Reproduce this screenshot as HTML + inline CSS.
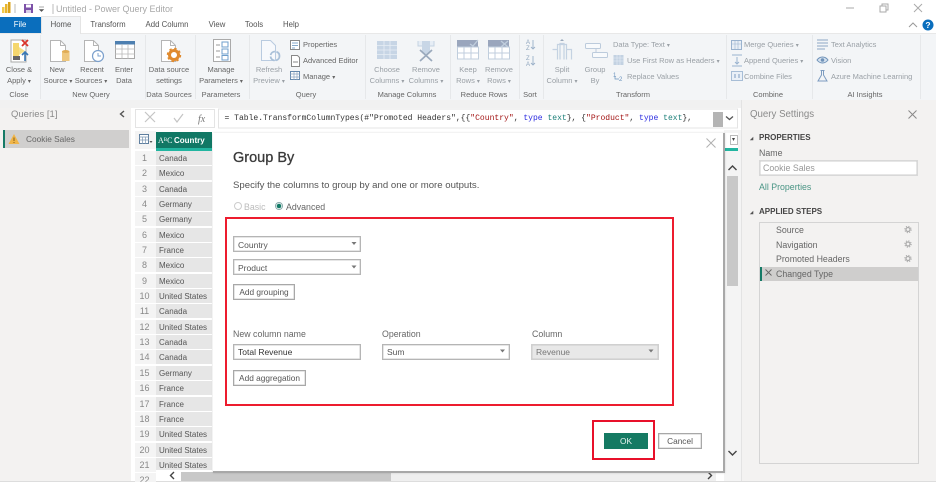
<!DOCTYPE html>
<html><head><meta charset="utf-8"><title>Power Query Editor</title>
<style>
html,body{margin:0;padding:0;background:#fff}
#p{position:relative;width:936px;height:482px;overflow:hidden;background:#fff;font-family:"Liberation Sans",sans-serif;font-size:7.5px;color:#555;filter:blur(.35px)}
#p div{position:absolute}
#p i{font-style:normal;font-size:6px}
.t{position:absolute;white-space:nowrap;line-height:12px;height:12px}
.c{transform:translateX(-50%);text-align:center}
.d{color:#9aa0a6}
.g{color:#666}
.tab{font-size:7.8px}
.r{left:135px;width:21px;height:14.4px;background:#f4f4f4}
.v{left:156px;width:56px;height:14.4px;background:#e6e6e6}
.n{left:135px;width:19px;text-align:center;font-size:9px;color:#888}
.w{left:159px;font-size:8px;color:#555}
.box{background:#fff;border:1px solid #b5b5b5;box-sizing:border-box;box-shadow:inset 0 0 0 .5px #ccc}
.fd{font-size:8.5px;color:#555}
.lab{font-size:8.8px;color:#666}
.q{font-size:8.8px;color:#666}
</style></head><body>
<div id="p">
<!-- backgrounds -->
<div style="left:0;top:33px;width:936px;height:67px;background:#f3f5f7;border-top:1px solid #e8e8e8;box-sizing:border-box"></div>
<div style="left:0;top:100px;width:936px;height:8px;background:#f1f1f1"></div>
<div style="left:0;top:108px;width:131px;height:374px;background:#f3f2f1"></div>
<div style="left:742px;top:100px;width:194px;height:382px;background:#f3f2f1"></div>
<div style="left:741px;top:100px;width:1px;height:382px;background:#e3e3e3"></div>
<div style="left:724px;top:130px;width:17px;height:352px;background:#f4f4f4"></div>
<div style="left:0;top:481px;width:936px;height:1px;background:#ddd"></div>
<!-- ribbon separators -->
<div style="left:40px;top:35px;width:1px;height:64px;background:#e6e8ea"></div>
<div style="left:145px;top:35px;width:1px;height:64px;background:#e6e8ea"></div>
<div style="left:195px;top:35px;width:1px;height:64px;background:#e6e8ea"></div>
<div style="left:249px;top:35px;width:1px;height:64px;background:#e6e8ea"></div>
<div style="left:365px;top:35px;width:1px;height:64px;background:#e6e8ea"></div>
<div style="left:450px;top:35px;width:1px;height:64px;background:#e6e8ea"></div>
<div style="left:519px;top:35px;width:1px;height:64px;background:#e6e8ea"></div>
<div style="left:543px;top:35px;width:1px;height:64px;background:#e6e8ea"></div>
<div style="left:726px;top:35px;width:1px;height:64px;background:#e6e8ea"></div>
<div style="left:812px;top:35px;width:1px;height:64px;background:#e6e8ea"></div>
<div style="left:920px;top:35px;width:1px;height:64px;background:#e6e8ea"></div>
<!-- tabs -->
<div style="left:0;top:17px;width:41px;height:16px;background:#0a6ebd"></div>
<div style="left:41px;top:16px;width:40px;height:18px;background:#f3f5f7;border:1px solid #e4e4e4;border-bottom:0;box-sizing:border-box"></div>
<span class="t c tab" style="left:20px;top:19px;color:#fff">File</span>
<span class="t c tab" style="left:61px;top:19px">Home</span>
<span class="t c tab" style="left:108px;top:19px">Transform</span>
<span class="t c tab" style="left:167px;top:19px">Add Column</span>
<span class="t c tab" style="left:217px;top:19px">View</span>
<span class="t c tab" style="left:254px;top:19px">Tools</span>
<span class="t c tab" style="left:291px;top:19px">Help</span>
<span class="t" style="left:56px;top:3px;font-size:9px;color:#a8a8a8">Untitled - Power Query Editor</span>

<!-- icon layer -->
<svg width="936" height="482" viewBox="0 0 936 482" style="position:absolute;left:0;top:0">
<!-- title bar -->
<rect x="2" y="7" width="2.500" height="6" fill="#f2c94c"/><rect x="5" y="4" width="2.500" height="9" fill="#e8b52c"/><rect x="8" y="2" width="2.500" height="11" fill="#d9a21a"/>
<path d="M15 4V13M53 4V14" stroke="#bbb" stroke-width="1"/>
<rect x="24" y="4" width="9" height="9" fill="#7d52a8"/><rect x="26" y="4.500" width="5" height="3" fill="#fff"/><rect x="26" y="10" width="5" height="3" fill="#d8d0e8"/>
<path d="M39 7h5M39.500 9.500h4l-2 2z" fill="#555" stroke="#555" stroke-width=".6"/>
<path d="M846 8h8" stroke="#aaa" stroke-width="1"/>
<path d="M880 6h6v6h-6zM882 6V4h6v6h-2" fill="none" stroke="#aaa" stroke-width="1"/>
<path d="M914 4l8 8M922 4l-8 8" stroke="#aaa" stroke-width="1"/>
<path d="M909 27l4-4 4 4" fill="none" stroke="#999" stroke-width="1"/>
<circle cx="928" cy="25" r="5.500" fill="#0a6ebd"/>
<text x="928" y="28" font-family="Liberation Sans" font-size="8.500" font-weight="bold" fill="#fff" text-anchor="middle">?</text>
<!-- Close & Apply -->
<rect x="11" y="40" width="15" height="22" fill="#fff" stroke="#aaa"/><path d="M13 43h6v13l-6 3z" fill="#f5d76e"/><path d="M19 47l6 4-6 4z" fill="#f5e08a"/><rect x="13" y="56" width="7" height="4" fill="#666"/>
<path d="M22 40l6 6M28 40l-6 6" stroke="#d9342b" stroke-width="1.800"/>
<path d="M25 61v-9M22 55l3-3 3 3" fill="none" stroke="#3a78b5" stroke-width="1.600"/>
<!-- New Source -->
<path d="M50.500 40.500h10l5 5v16h-15z" fill="#fff" stroke="#b5b5b5"/><path d="M60.500 40.500v5h5" fill="none" stroke="#b5b5b5"/>
<path d="M62 52h7.500v9h-7.500z" fill="#eec77e"/><ellipse cx="65.700" cy="51.500" rx="3.800" ry="1.500" fill="#e0ac55"/>
<!-- Recent Sources -->
<path d="M84.500 40.500h9l5 5v16h-14z" fill="#fff" stroke="#b5b5b5"/><path d="M93.500 40.500v5h5" fill="none" stroke="#b5b5b5"/>
<circle cx="98" cy="56" r="5.500" fill="#fff" stroke="#7ba0cc" stroke-width="1.200"/><path d="M98 53v3h3" fill="none" stroke="#7ba0cc"/>
<!-- Enter Data -->
<rect x="115.500" y="41.500" width="19" height="17" fill="#fff" stroke="#a8a8a8"/><rect x="115" y="41" width="20" height="3.500" fill="#4d7fb0"/>
<path d="M115 49h20M115 54h20M122 44v15M128 44v15" stroke="#b8b8b8" stroke-width=".8"/>
<!-- Data source settings -->
<path d="M161.500 40.500h9l5 5v16h-14z" fill="#fff" stroke="#b5b5b5"/><path d="M170.500 40.500v5h5" fill="none" stroke="#b5b5b5"/>
<circle cx="174" cy="55" r="4.500" fill="#fff" stroke="#e08a2e" stroke-width="3"/><circle cx="174" cy="55" r="6.500" fill="none" stroke="#e08a2e" stroke-width="1.400" stroke-dasharray="2.500 2.600"/>
<!-- Manage Parameters -->
<rect x="213.500" y="39.500" width="17" height="22" fill="#fff" stroke="#aaa"/><path d="M216 45h4M216 51h4M216 57h4" stroke="#999"/><rect x="222" y="42" width="6" height="5" fill="#fff" stroke="#6f9fcc"/><rect x="222" y="49" width="6" height="5" fill="#fff" stroke="#6f9fcc"/><rect x="222" y="55.500" width="6" height="4.500" fill="#fff" stroke="#6f9fcc"/>
<!-- Refresh -->
<path d="M261.500 40.500h9l5 5v15h-14z" fill="#f7f9fc" stroke="#b9cbe0"/>
<circle cx="275" cy="56" r="4.500" fill="none" stroke="#a9c0d8" stroke-width="1.800" stroke-dasharray="6 1.500"/>
<!-- small query icons -->
<rect x="290.500" y="40.500" width="9" height="9" fill="#fff" stroke="#888"/><path d="M292 43h6M292 45.500h6M292 48h3" stroke="#5b8bb8" stroke-width=".8"/>
<path d="M291.500 55.500h6l2 2v9h-8z" fill="#fff" stroke="#888"/><path d="M293 62h5" stroke="#888"/>
<rect x="290.500" y="71.500" width="9" height="8" fill="#fff" stroke="#6488ad"/><path d="M290 74h10M290 77h10M294 72v8M297 72v8" stroke="#8aa4c0" stroke-width=".7"/>
<!-- Choose columns -->
<rect x="377" y="41" width="20" height="18" fill="#c7d5e5"/><path d="M377 45.500h20M377 50h20M377 54.500h20M384 41v18M390 41v18" stroke="#e8eef5" stroke-width=".8"/>
<!-- Remove columns -->
<path d="M418 41v5h16v-5" fill="#e6edf5" stroke="#c4d2e2"/><path d="M422 41h8v12l-4 3-4-3z" fill="#c8d6e6"/>
<path d="M420 50l12 11M432 50l-12 11" stroke="#9aa9bc" stroke-width="1.700"/>
<!-- Keep rows -->
<rect x="457" y="40" width="21" height="7" fill="#9aa6bd"/><rect x="457.500" y="47" width="21" height="12" fill="#fff" stroke="#c0cedd"/><path d="M457 53h21M464 47v12M471 47v12" stroke="#c0cedd"/><path d="M470 44l3 2 5-6" fill="none" stroke="#c0cedd" stroke-width="1.300"/>
<!-- Remove rows -->
<rect x="488" y="40" width="21" height="7" fill="#9aa6bd"/><rect x="488.500" y="47" width="21" height="12" fill="#fff" stroke="#c0cedd"/><path d="M488 53h21M495 47v12M502 47v12" stroke="#c0cedd"/><path d="M501 41l7 6M508 41l-7 6" stroke="#c0cedd" stroke-width="1.300"/>
<!-- sort -->
<text x="526" y="44" font-family="Liberation Sans" font-size="6" fill="#8fa5bd">A</text><text x="526" y="50" font-family="Liberation Sans" font-size="6" fill="#8fa5bd">Z</text>
<text x="526" y="60" font-family="Liberation Sans" font-size="6" fill="#8fa5bd">Z</text><text x="526" y="66" font-family="Liberation Sans" font-size="6" fill="#8fa5bd">A</text>
<path d="M533 40v9M531 47l2 2 2-2M533 56v9M531 63l2 2 2-2" fill="none" stroke="#9ab0c8" stroke-width=".9"/>
<!-- split column -->
<path d="M552.500 49.500h5v10M566.500 59.500v-10h5v10M557.500 59.500v-15h9v15M560 59.500v-16h4v16" fill="none" stroke="#c4d2e2" stroke-width="1.200"/><path d="M560 41h4l-2-2z" fill="#9aa9bc"/>
<!-- group by -->
<rect x="585.500" y="43.500" width="15" height="5" rx="1" fill="#f8fafc" stroke="#bccbdc"/><rect x="592.500" y="52.500" width="15" height="5" rx="1" fill="#f8fafc" stroke="#bccbdc"/><path d="M596 48.500v4" stroke="#bccbdc"/>
<!-- Transform small -->
<rect x="613.500" y="55" width="10" height="10" fill="#c3d2e2"/><path d="M613 58h11M613 61h11M617 55v10M620 55v10" stroke="#e8eef5" stroke-width=".6"/>
<text x="613" y="77" font-family="Liberation Sans" font-size="6" fill="#6a93bd">1</text><text x="619" y="81" font-family="Liberation Sans" font-size="6" fill="#6a93bd">2</text><path d="M615 76v3h4" fill="none" stroke="#6a93bd" stroke-width=".7"/>
<!-- combine -->
<rect x="731.500" y="40.500" width="10" height="9" fill="#e9eff6" stroke="#9ab3cf"/><path d="M731 44h11M735 41v8M738 41v8" stroke="#9ab3cf" stroke-width=".6"/>
<path d="M732 55h10M732 66h10" stroke="#9ab3cf"/><path d="M737 57v7M735 62l2 2 2-2" fill="none" stroke="#9ab3cf"/>
<rect x="731.500" y="71.500" width="11" height="9" fill="#eaf0f7" stroke="#a7bdd6"/><path d="M735 74v4M739 74v4" stroke="#7d9cc0"/>
<!-- AI -->
<path d="M817 40h11M817 43h11M817 46h11M817 49h8" stroke="#8ea8c4" stroke-width=".9"/>
<path d="M817 60c3-4 8-4 11 0c-3 4-8 4-11 0z" fill="#d6e2ef" stroke="#6f92b8"/><circle cx="822.500" cy="60" r="1.800" fill="#6f92b8"/>
<path d="M820.500 70.500h4M821.500 71v4l-3.500 6h9l-3.500-6v-4" fill="none" stroke="#7d9cc0"/>
<!-- left chevron -->
<path d="M124 111l-3.500 3 3.500 3" fill="none" stroke="#555" stroke-width="1.400"/>
<!-- formula icons -->
<rect x="135.500" y="109.500" width="79" height="18" fill="#fff" stroke="#e4e4e4"/>
<path d="M145 112l10 10M155 112l-10 10" stroke="#c4c4c4" stroke-width="1.200"/>
<path d="M174 118l3 4 6-8" fill="none" stroke="#c4c4c4" stroke-width="1.200"/>
<text x="198" y="122" font-family="Liberation Serif" font-style="italic" font-size="10" fill="#777">fx</text>
<rect x="218.500" y="109" width="519" height="19" fill="#fff" stroke="#e4e4e4"/>
<rect x="713" y="112" width="10" height="15" fill="#b4b4b4"/>
<path d="M726 116.500l3.500 3 3.500-3" fill="none" stroke="#555" stroke-width="1.300"/>
<!-- right X -->
<path d="M908.500 110.500l8 8M916.500 110.500l-8 8" stroke="#888" stroke-width="1"/>
<path d="M753 140l-2.500 0 2.500-2.500zM753 214l-2.500 0 2.500-2.500z" fill="#555" stroke="#555" stroke-width=".6"/>
</svg>

<!-- ribbon big labels -->
<span class="t c g" style="left:19px;top:64px">Close &amp;</span><span class="t c g" style="left:19px;top:75px">Apply <i>▾</i></span>
<span class="t c g" style="left:57px;top:64px">New</span><span class="t c g" style="left:58px;top:75px">Source <i>▾</i></span>
<span class="t c g" style="left:92px;top:64px">Recent</span><span class="t c g" style="left:91px;top:75px">Sources <i>▾</i></span>
<span class="t c g" style="left:124px;top:64px">Enter</span><span class="t c g" style="left:124px;top:75px">Data</span>
<span class="t c g" style="left:169px;top:64px">Data source</span><span class="t c g" style="left:169px;top:75px">settings</span>
<span class="t c g" style="left:221px;top:64px">Manage</span><span class="t c g" style="left:221px;top:75px">Parameters <i>▾</i></span>
<span class="t c d" style="left:269px;top:64px">Refresh</span><span class="t c d" style="left:269px;top:75px">Preview <i>▾</i></span>
<span class="t g" style="left:303px;top:39px">Properties</span><span class="t g" style="left:303px;top:55px">Advanced Editor</span><span class="t g" style="left:303px;top:71px">Manage <i>▾</i></span>
<span class="t c d" style="left:387px;top:64px">Choose</span><span class="t c d" style="left:387px;top:75px">Columns <i>▾</i></span>
<span class="t c d" style="left:426px;top:64px">Remove</span><span class="t c d" style="left:426px;top:75px">Columns <i>▾</i></span>
<span class="t c d" style="left:468px;top:64px">Keep</span><span class="t c d" style="left:468px;top:75px">Rows <i>▾</i></span>
<span class="t c d" style="left:499px;top:64px">Remove</span><span class="t c d" style="left:499px;top:75px">Rows <i>▾</i></span>
<span class="t c d" style="left:562px;top:64px">Split</span><span class="t c d" style="left:562px;top:75px">Column <i>▾</i></span>
<span class="t c d" style="left:595px;top:64px">Group</span><span class="t c d" style="left:595px;top:75px">By</span>
<span class="t d" style="left:613px;top:39px">Data Type: Text <i>▾</i></span><span class="t d" style="left:627px;top:55px">Use First Row as Headers <i>▾</i></span><span class="t d" style="left:627px;top:71px">Replace Values</span>
<span class="t d" style="left:744px;top:39px">Merge Queries <i>▾</i></span><span class="t d" style="left:744px;top:55px">Append Queries <i>▾</i></span><span class="t d" style="left:744px;top:71px">Combine Files</span>
<span class="t d" style="left:831px;top:39px">Text Analytics</span><span class="t d" style="left:831px;top:55px">Vision</span><span class="t d" style="left:831px;top:71px">Azure Machine Learning</span>
<!-- group labels -->
<span class="t c g" style="left:19px;top:88.500px">Close</span>
<span class="t c g" style="left:91px;top:88.500px">New Query</span>
<span class="t c g" style="left:169px;top:88.500px">Data Sources</span>
<span class="t c g" style="left:221px;top:88.500px">Parameters</span>
<span class="t c g" style="left:306px;top:88.500px">Query</span>
<span class="t c g" style="left:407px;top:88.500px">Manage Columns</span>
<span class="t c g" style="left:484px;top:88.500px">Reduce Rows</span>
<span class="t c g" style="left:530px;top:88.500px">Sort</span>
<span class="t c g" style="left:633px;top:88.500px">Transform</span>
<span class="t c g" style="left:768px;top:88.500px">Combine</span>
<span class="t c g" style="left:865px;top:88.500px">AI Insights</span>

<!-- queries -->
<span class="t" style="left:11px;top:109px;font-size:9.500px;color:#8a8a8a">Queries [1]</span>
<div style="left:3px;top:130px;width:126px;height:18px;background:#d0cfce"></div>
<div style="left:3px;top:130px;width:2px;height:18px;background:#157a66"></div>
<svg width="12" height="12" style="position:absolute;left:8px;top:133px"><path d="M6 1l5.500 10h-11z" fill="#f0b549"/><path d="M6 4.500V8M6 9v1" stroke="#6b4a10" stroke-width=".8"/></svg>
<span class="t" style="left:26px;top:133px;font-size:8.300px;color:#666">Cookie Sales</span>

<!-- formula text -->
<span class="t" style="left:224.500px;top:113px;font-family:'Liberation Mono',monospace;font-size:8.040px;color:#333">= Table.TransformColumnTypes(#"Promoted Headers",{{<span style="color:#a31515">"Country"</span>, <span style="color:#2b2be0">type</span> <span style="color:#1b7f78">text</span>}, {<span style="color:#a31515">"Product"</span>, <span style="color:#2b2be0">type</span> <span style="color:#1b7f78">text</span>},</span>

<!-- table header -->
<div style="left:135px;top:131px;width:21px;height:18px;background:#f4f4f4"></div>
<svg width="14" height="12" style="position:absolute;left:139px;top:134px"><rect x=".5" y=".5" width="9" height="9" fill="#fff" stroke="#5f7f9f"/><path d="M0 3h10M0 6h10M3.500 3v7M6.500 3v7" stroke="#7c98b4" stroke-width=".7"/><path d="M10.500 7h3l-1.500 2z" fill="#555"/></svg>
<div style="left:156px;top:132px;width:56px;height:16px;background:#117865"></div>
<div style="left:156px;top:148px;width:56px;height:2.500px;background:#22b5a0"></div>
<span class="t" style="left:158px;top:135px;color:#fff;font-size:8px;font-family:'Liberation Serif',serif">A<span style="font-size:5px;vertical-align:2px">B</span>C</span>
<span class="t" style="left:174px;top:135px;color:#fff;font-size:8px;font-weight:bold">Country</span>

<!-- rows -->
<div class="r" style="top:151px"></div><div class="v" style="top:151px"></div><span class="t n" style="top:152px">1</span><span class="t w" style="top:153px">Canada</span>
<div class="r" style="top:166px"></div><div class="v" style="top:166px"></div><span class="t n" style="top:167px">2</span><span class="t w" style="top:168px">Mexico</span>
<div class="r" style="top:182px"></div><div class="v" style="top:182px"></div><span class="t n" style="top:183px">3</span><span class="t w" style="top:184px">Canada</span>
<div class="r" style="top:197px"></div><div class="v" style="top:197px"></div><span class="t n" style="top:198px">4</span><span class="t w" style="top:199px">Germany</span>
<div class="r" style="top:212px"></div><div class="v" style="top:212px"></div><span class="t n" style="top:213px">5</span><span class="t w" style="top:214px">Germany</span>
<div class="r" style="top:228px"></div><div class="v" style="top:228px"></div><span class="t n" style="top:229px">6</span><span class="t w" style="top:230px">Mexico</span>
<div class="r" style="top:243px"></div><div class="v" style="top:243px"></div><span class="t n" style="top:244px">7</span><span class="t w" style="top:245px">France</span>
<div class="r" style="top:258px"></div><div class="v" style="top:258px"></div><span class="t n" style="top:259px">8</span><span class="t w" style="top:260px">Mexico</span>
<div class="r" style="top:274px"></div><div class="v" style="top:274px"></div><span class="t n" style="top:275px">9</span><span class="t w" style="top:276px">Mexico</span>
<div class="r" style="top:289px"></div><div class="v" style="top:289px"></div><span class="t n" style="top:290px">10</span><span class="t w" style="top:291px">United States</span>
<div class="r" style="top:304px"></div><div class="v" style="top:304px"></div><span class="t n" style="top:305px">11</span><span class="t w" style="top:306px">Canada</span>
<div class="r" style="top:320px"></div><div class="v" style="top:320px"></div><span class="t n" style="top:321px">12</span><span class="t w" style="top:322px">United States</span>
<div class="r" style="top:335px"></div><div class="v" style="top:335px"></div><span class="t n" style="top:336px">13</span><span class="t w" style="top:337px">Canada</span>
<div class="r" style="top:350px"></div><div class="v" style="top:350px"></div><span class="t n" style="top:351px">14</span><span class="t w" style="top:352px">Canada</span>
<div class="r" style="top:366px"></div><div class="v" style="top:366px"></div><span class="t n" style="top:367px">15</span><span class="t w" style="top:368px">Germany</span>
<div class="r" style="top:381px"></div><div class="v" style="top:381px"></div><span class="t n" style="top:382px">16</span><span class="t w" style="top:383px">France</span>
<div class="r" style="top:397px"></div><div class="v" style="top:397px"></div><span class="t n" style="top:398px">17</span><span class="t w" style="top:399px">France</span>
<div class="r" style="top:412px"></div><div class="v" style="top:412px"></div><span class="t n" style="top:413px">18</span><span class="t w" style="top:414px">France</span>
<div class="r" style="top:427px"></div><div class="v" style="top:427px"></div><span class="t n" style="top:428px">19</span><span class="t w" style="top:429px">United States</span>
<div class="r" style="top:443px"></div><div class="v" style="top:443px"></div><span class="t n" style="top:444px">20</span><span class="t w" style="top:445px">United States</span>
<div class="r" style="top:458px"></div><div class="v" style="top:458px"></div><span class="t n" style="top:459px">21</span><span class="t w" style="top:460px">United States</span>
<div class="r" style="top:473px;height:9px;overflow:hidden"></div><span class="t n" style="top:474px;height:8px;overflow:hidden">22</span>

<!-- horizontal scrollbar -->
<div style="left:156px;top:470px;width:568px;height:11px;background:#fff"></div>
<div style="left:181px;top:472px;width:210px;height:9px;background:#c8c8c8"></div>
<div style="left:391px;top:472px;width:325px;height:9px;background:#efefef"></div>
<svg width="600" height="12" style="position:absolute;left:160px;top:470px"><path d="M14 2l-3.500 3.500 3.500 3.500M548 2l3.500 3.500-3.500 3.500" fill="none" stroke="#444" stroke-width="1.400"/></svg>

<!-- vertical scrollbar -->
<div style="left:724px;top:133px;width:14px;height:15px;background:#fff"></div>
<div style="left:730px;top:135px;width:8px;height:10px;background:#fff;border:1px solid #bbb;box-sizing:border-box"></div>
<span class="t" style="left:732px;top:134px;font-size:6px;color:#444">▾</span>
<div style="left:724px;top:148px;width:14px;height:2.500px;background:#22b5a0"></div>
<div style="left:727px;top:176px;width:11px;height:110px;background:#c8c8c8"></div>
<svg width="14" height="310" style="position:absolute;left:726px;top:160px"><path d="M2.500 10l4-4 4 4M2.500 291l4 4 4-4" fill="none" stroke="#444" stroke-width="1.400"/></svg>

<!-- dialog -->
<div style="left:213px;top:133px;width:512px;height:340px;background:#fff;border-right:2px solid #a8a8a8;border-bottom:2px solid #a8a8a8;box-sizing:border-box;box-shadow:0 0 2px rgba(0,0,0,.15)"></div>
<svg width="12" height="12" style="position:absolute;left:705px;top:137px"><path d="M1.500 1.500l9 9M10.500 1.500l-9 9" stroke="#b0b0b0" stroke-width="1"/></svg>
<span class="t" style="left:233px;top:150px;height:17px;line-height:17px;font-size:14.500px;color:#3a3a3a;-webkit-text-stroke:.3px #3a3a3a">Group By</span>
<span class="t" style="left:233px;top:180px;font-size:9.600px;color:#555">Specify the columns to group by and one or more outputs.</span>
<svg width="60" height="12" style="position:absolute;left:233px;top:200px"><circle cx="5" cy="6" r="3.500" fill="#fff" stroke="#ccc"/><circle cx="46" cy="6" r="3.500" fill="#fff" stroke="#8aa"/><circle cx="46" cy="6" r="2.300" fill="#137a66"/></svg>
<span class="t" style="left:244px;top:201px;font-size:8.800px;color:#bbb">Basic</span>
<span class="t" style="left:286px;top:201px;font-size:8.800px;color:#666">Advanced</span>

<!-- red boxes -->
<div style="left:225px;top:217px;width:449px;height:189px;border:2px solid #ed1c2e;box-sizing:border-box"></div>
<div style="left:592px;top:420px;width:63px;height:40px;border:2px solid #e8102a;box-sizing:border-box"></div>

<!-- controls -->
<div class="box" style="left:233px;top:236px;width:128px;height:16px"></div><span class="t fd" style="left:238px;top:238.500px">Country</span>
<div class="box" style="left:233px;top:259px;width:128px;height:16px"></div><span class="t fd" style="left:238px;top:261.500px">Product</span>
<div class="box" style="left:233px;top:284px;width:62px;height:16px;border-color:#a8a8a8"></div><span class="t c" style="left:264px;top:286px;font-size:8.300px">Add grouping</span>
<span class="t lab" style="left:233px;top:327.500px">New column name</span>
<span class="t lab" style="left:382px;top:327.500px">Operation</span>
<span class="t lab" style="left:532px;top:327.500px">Column</span>
<div class="box" style="left:233px;top:344px;width:128px;height:16px"></div><span class="t fd" style="left:238px;top:346px;color:#333">Total Revenue</span>
<div class="box" style="left:382px;top:344px;width:128px;height:16px"></div><span class="t fd" style="left:387px;top:346px">Sum</span>
<div class="box" style="left:531px;top:344px;width:128px;height:16px;background:#e8e8e8;border-color:#d0d0d0"></div><span class="t fd" style="left:536px;top:346px;color:#777">Revenue</span>
<div class="box" style="left:233px;top:370px;width:73px;height:16px;border-color:#a8a8a8"></div><span class="t c" style="left:269.500px;top:372px;font-size:8.300px">Add aggregation</span>
<svg width="440" height="150" style="position:absolute;left:340px;top:236px"><path d="M11.500 6h5l-2.500 3zM11.500 29.500h5l-2.500 3zM160 113.500h5l-2.500 3zM308.500 113.500h5l-2.500 3z" fill="#777"/></svg>
<div style="left:604px;top:433px;width:44px;height:16px;background:#157a63"></div>
<span class="t c" style="left:626px;top:435px;color:#e8f3f0;font-size:8.300px">OK</span>
<div class="box" style="left:658px;top:433px;width:44px;height:16px;border-color:#a8a8a8"></div>
<span class="t c" style="left:680px;top:435px;font-size:8.300px">Cancel</span>

<!-- query settings -->
<span class="t" style="left:750px;top:109px;font-size:9.700px;color:#8a8a8a">Query Settings</span>
<span class="t" style="left:759px;top:132px;font-size:8px;font-weight:bold;color:#444">PROPERTIES</span>
<span class="t q" style="left:759px;top:147px">Name</span>
<div class="box" style="left:759px;top:160px;width:159px;height:16px;border-color:#d8d8d8"></div>
<span class="t" style="left:763px;top:162px;font-size:8.800px;color:#999">Cookie Sales</span>
<span class="t" style="left:759px;top:181px;font-size:8.800px;color:#4a9585">All Properties</span>
<span class="t" style="left:759px;top:206px;font-size:8px;font-weight:bold;color:#444">APPLIED STEPS</span>
<div style="left:759px;top:222px;width:160px;height:242px;border:1.500px solid #d4d4d4;box-sizing:border-box"></div>
<div style="left:760px;top:267px;width:158px;height:14px;background:#cfcecd"></div>
<div style="left:760px;top:267px;width:2px;height:14px;background:#157a66"></div>
<svg width="150" height="60" style="position:absolute;left:764px;top:225px"><path d="M1.500 44.500l6 6M7.500 44.500l-6 6" stroke="#666" stroke-width=".9"/><g fill="none" stroke="#aaa"><circle cx="144" cy="4.500" r="2" stroke-width="1.200"/><circle cx="144" cy="4.500" r="3.200" stroke-width="1" stroke-dasharray="1.200 1.300"/><circle cx="144" cy="19" r="2" stroke-width="1.200"/><circle cx="144" cy="19" r="3.200" stroke-width="1" stroke-dasharray="1.200 1.300"/><circle cx="144" cy="33.500" r="2" stroke-width="1.200"/><circle cx="144" cy="33.500" r="3.200" stroke-width="1" stroke-dasharray="1.200 1.300"/></g></svg>
<span class="t q" style="left:776px;top:224px">Source</span>
<span class="t q" style="left:776px;top:239px">Navigation</span>
<span class="t q" style="left:776px;top:253px">Promoted Headers</span>
<span class="t q" style="left:776px;top:268px">Changed Type</span>
</div>
</body></html>
